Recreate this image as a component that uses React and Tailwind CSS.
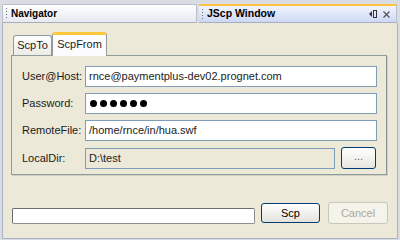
import React from "react";

function Grip() {
  return (
    <svg width="3" height="11" viewBox="0 0 3 11" className="shrink-0">
      <rect x="1" y="0" width="1" height="1" fill="#6b6b6b" />
      <rect x="1" y="3" width="1" height="1" fill="#6b6b6b" />
      <rect x="1" y="6" width="1" height="1" fill="#6b6b6b" />
      <rect x="1" y="9" width="1" height="1" fill="#6b6b6b" />
    </svg>
  );
}

function Field({ children, disabled }) {
  return (
    <div
      className={
        "flex h-[21px] items-center border border-[#7f9db9] px-[2px] text-[11px] text-[#222] " +
        (disabled ? "bg-[#ece9d8]" : "bg-white")
      }
    >
      {children}
    </div>
  );
}

export default function App() {
  const rows = [
    { label: "User@Host:", value: "rnce@paymentplus-dev02.prognet.com" },
    { label: "Password:", password: true },
    { label: "RemoteFile:", value: "/home/rnce/in/hua.swf" },
  ];

  return (
    <div className="flex h-[240px] w-[400px] flex-col bg-[#d9dce3] font-['Liberation_Sans',Arial,sans-serif] text-[11px] text-[#1b1b1b]">
      {/* view headers */}
      <div className="mt-[4px] flex h-[19px] gap-[2px] pl-[2px]">
        <div className="flex w-[195px] items-center gap-[3px] rounded-t-[2px] border border-[#b9bfcc] border-b-[#a7afc0] bg-gradient-to-b from-[#ffffff] to-[#e6e9f0] pl-[2px]">
          <Grip />
          <span className="text-[10px] font-bold text-black">Navigator</span>
        </div>
        <div className="flex w-[198px] items-center gap-[3px] border-t-[2px] border-t-[#ffc340] border-b border-b-[#a7afc0] border-r border-r-[#b9bfcc] bg-gradient-to-b from-[#f2f5fd] to-[#cdd8f4] pl-[2px]">
          <Grip />
          <span className="text-[10.5px] font-bold text-black">JScp Window</span>
          <div className="ml-auto mr-[6px] flex items-center gap-[6px]">
            <svg width="8" height="8" viewBox="0 0 8 8">
              <path d="M0 4 L3 1 L3 7 Z" fill="#333" />
              <rect x="4.5" y="0.5" width="3" height="7" fill="none" stroke="#333" />
            </svg>
            <svg width="7" height="7" viewBox="0 0 7 7">
              <path d="M0.5 0.5 L6.5 6.5 M6.5 0.5 L0.5 6.5" stroke="#555" strokeWidth="1.3" />
            </svg>
          </div>
        </div>
      </div>

      {/* content */}
      <div className="ml-[2px] flex h-[216px] w-[396px] flex-col border-x border-b border-x-[#a9b1c4] border-b-[#a9b1c4] bg-[#ece9d8] pl-[8px] pt-[9px]">
        {/* tabs */}
        <div className="flex h-[23px] items-end pl-[2px]">
          <div className="flex h-[20px] w-[39px] items-center justify-center rounded-t-[3px] border border-b-0 border-[#919b9c] bg-gradient-to-b from-[#ffffff] to-[#ecebe5] text-[11px]">
            ScpTo
          </div>
          <div className="relative z-10 -mb-px flex h-[24px] w-[55px] items-center justify-center rounded-t-[3px] border-x border-t-[3px] border-x-[#919b9c] border-t-[#ffc83c] bg-[#fcfcfe] pb-[2px] text-[11px]">
            ScpFrom
          </div>
        </div>

        {/* pane */}
        <div className="flex h-[120px] w-[376px] flex-col gap-[6px] border border-[#919b9c] border-r-[#8b9597] bg-[#ece9d8] pl-[10px] pr-[9px] pt-[10px] shadow-[1px_1px_0_#d0cfc4]">
          {rows.map((r) => (
            <div key={r.label} className="flex items-center">
              <span className="w-[63px] shrink-0">{r.label}</span>
              <div className="flex-1">
                <Field>
                  {r.password ? (
                    <div className="ml-[2px] flex gap-[3px]">
                      {[0, 1, 2, 3, 4, 5].map((i) => (
                        <span key={i} className="h-[7px] w-[7px] rounded-full bg-black" />
                      ))}
                    </div>
                  ) : (
                    <span className="ml-px">{r.value}</span>
                  )}
                </Field>
              </div>
            </div>
          ))}
          <div className="flex items-center">
            <span className="w-[63px] shrink-0">LocalDir:</span>
            <div className="w-[250px]">
              <Field disabled>
                <span className="ml-px">D:\test</span>
              </Field>
            </div>
            <button className="ml-[6px] flex h-[22px] w-[35px] items-center justify-center rounded-[3px] border border-[#003c74] bg-gradient-to-b from-[#ffffff] to-[#e6e5de] pb-[3px] text-[11px] text-[#5a6a7a]">
              ...
            </button>
          </div>
        </div>

        {/* bottom row */}
        <div className="mt-[27px] flex h-[22px] items-end">
          <div className="ml-px h-[16px] w-[243px] rounded-[2px] border border-[#8e8e8e] border-l-[#6e6e6e] border-t-[#6e6e6e] bg-white" />
          <button className="mb-[1px] ml-[6px] flex h-[20px] w-[59px] items-center justify-center rounded-[3px] border border-[#003c74] bg-gradient-to-b from-[#ffffff] to-[#e3e2da] text-[11px] text-black">
            Scp
          </button>
          <button className="ml-[8px] flex h-[22px] w-[60px] items-center justify-center rounded-[3px] border border-[#c9c7ba] bg-[#f5f4ea] text-[11px] text-[#aca899]">
            Cancel
          </button>
        </div>
      </div>
    </div>
  );
}
